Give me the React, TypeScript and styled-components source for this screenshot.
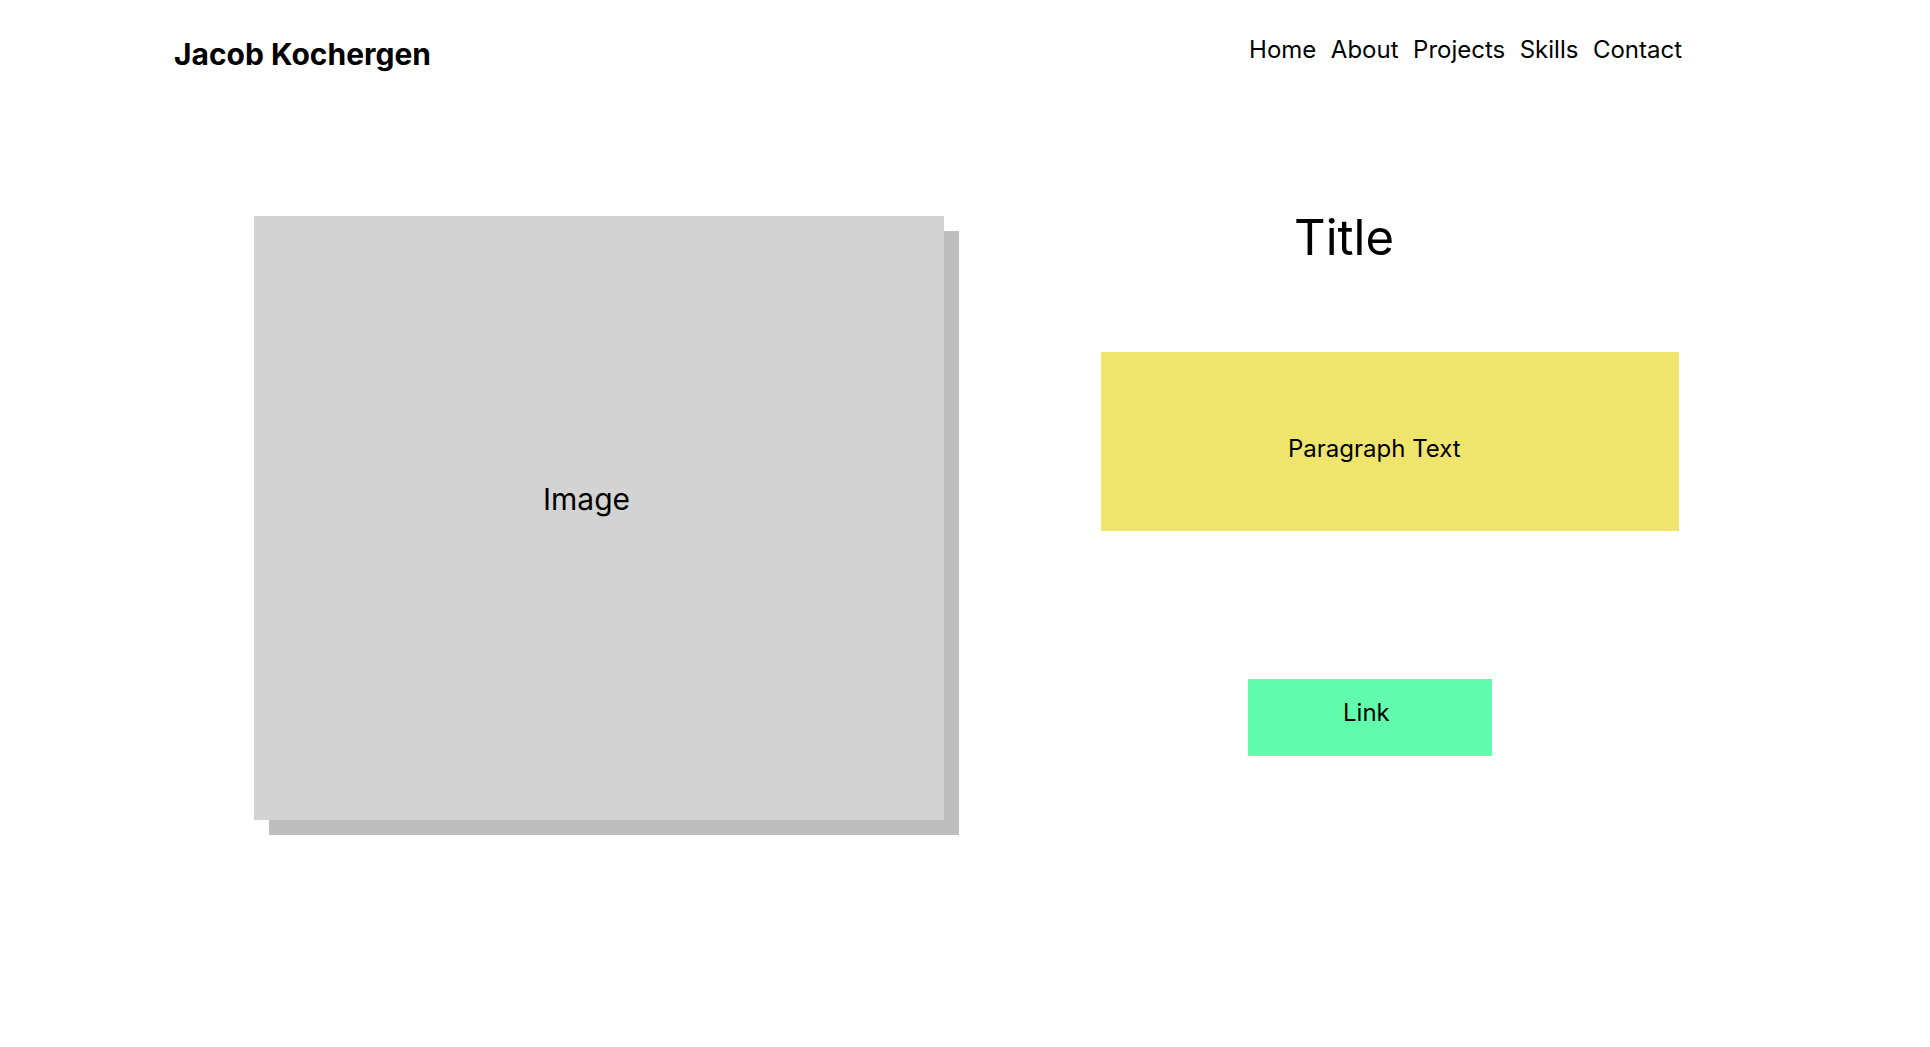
import React from "react";
import styled, { createGlobalStyle } from "styled-components";

const GlobalStyle = createGlobalStyle`
  html, body {
    margin: 0;
    padding: 0;
    background: #ffffff;
  }
  body {
    font-family: Inter, "Noto Sans", "Liberation Sans", sans-serif;
    color: #000000;
  }
  * { box-sizing: border-box; }
`;

const Page = styled.div`
  width: 1930px;
  min-height: 1047px;
  background: #ffffff;
`;

const Header = styled.header`
  display: flex;
  justify-content: space-between;
  align-items: flex-start;
  height: 72px;
  padding: 35px 248px 0 174px;
`;

const Logo = styled.div`
  margin-top: 1px;
  font-size: 30px;
  line-height: 36px;
  font-weight: 700;
`;

const Nav = styled.nav`
  display: flex;
  gap: 14.5px;
`;

const NavLink = styled.a`
  font-size: 24px;
  line-height: 29px;
  color: #000000;
  text-decoration: none;
`;

const Main = styled.main`
  display: flex;
  align-items: flex-start;
  padding: 137px 0 0 254px;
`;

const ImageBox = styled.div`
  width: 690px;
  height: 604px;
  margin-top: 7px;
  background: #d3d3d3;
  box-shadow: 15px 15px 0 #bebebe;
  padding: 265px 0 0 289px;
  font-size: 30px;
  line-height: 36px;
`;

const Column = styled.section`
  display: flex;
  flex-direction: column;
  align-items: flex-start;
  width: 578px;
  margin-left: 157px;
`;

const Title = styled.h1`
  margin: 0;
  padding-left: 193px;
  font-size: 49px;
  line-height: 58px;
  font-weight: 400;
`;

const Paragraph = styled.p`
  margin: 85px 0 0;
  width: 578px;
  height: 179px;
  padding: 82px 0 0 187px;
  background: #f0e56c;
  font-size: 24px;
  line-height: 29px;
`;

const LinkButton = styled.a`
  display: block;
  margin: 148px 0 0 147px;
  width: 244px;
  height: 77px;
  padding: 19px 0 0 95px;
  background: #61fdad;
  color: #000000;
  text-decoration: none;
  font-size: 24px;
  line-height: 29px;
`;

const navItems = ["Home", "About", "Projects", "Skills", "Contact"];

export default function App() {
  return (
    <Page>
      <GlobalStyle />
      <Header>
        <Logo>Jacob Kochergen</Logo>
        <Nav>
          {navItems.map((item) => (
            <NavLink key={item} href="#">
              {item}
            </NavLink>
          ))}
        </Nav>
      </Header>
      <Main>
        <ImageBox>Image</ImageBox>
        <Column>
          <Title>Title</Title>
          <Paragraph>Paragraph Text</Paragraph>
          <LinkButton href="#">Link</LinkButton>
        </Column>
      </Main>
    </Page>
  );
}
